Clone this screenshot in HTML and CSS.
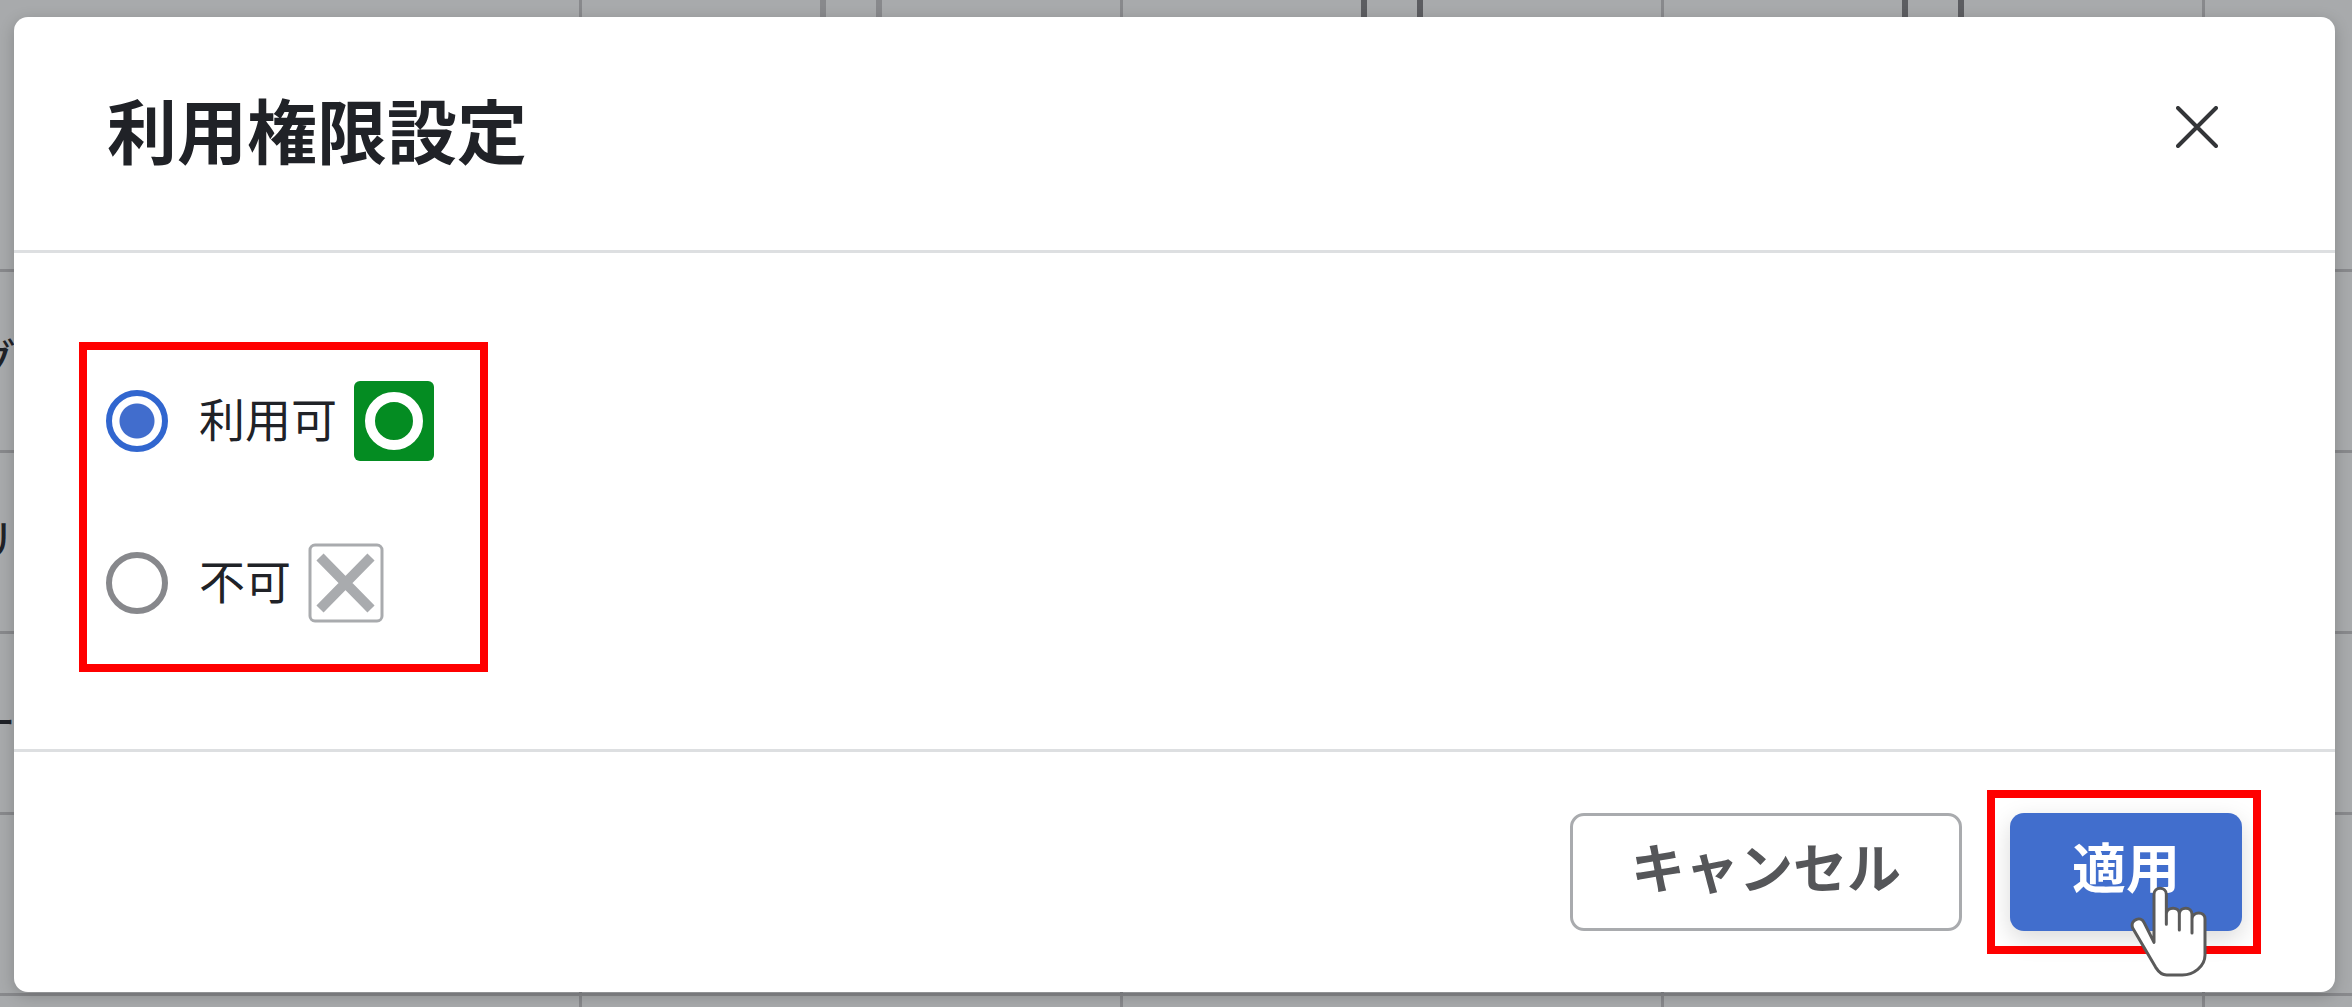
FILE: index.html
```html
<!DOCTYPE html>
<html lang="ja">
<head>
<meta charset="utf-8">
<meta name="viewport" content="width=device-width, initial-scale=1">
<title>利用権限設定</title>
<link rel="stylesheet" href="styles.css">
</head>
<body>
<div class="page">
  <table class="grid" aria-hidden="true">
    <colgroup><col class="col-name"><col class="col-role"><col class="col-role"><col class="col-role"><col></colgroup>
    <thead>
      <tr>
        <th></th>
        <th><input class="check check-off" type="checkbox" disabled></th>
        <th><input class="check" type="checkbox" tabindex="-1"></th>
        <th><input class="check" type="checkbox" tabindex="-1"></th>
        <th></th>
      </tr>
    </thead>
    <tbody>
      <tr><td><span class="name">グ</span></td><td></td><td></td><td></td><td></td></tr>
      <tr><td><span class="name">リ</span></td><td></td><td></td><td></td><td></td></tr>
      <tr><td><span class="name">ー</span></td><td></td><td></td><td></td><td></td></tr>
      <tr><td></td><td></td><td></td><td></td><td></td></tr>
      <tr><td></td><td></td><td></td><td></td><td></td></tr>
    </tbody>
  </table>

  <form class="dialog" role="dialog" aria-labelledby="dialog-title">
    <header class="dialog-header">
      <h1 class="dialog-title" id="dialog-title">利用権限設定</h1>
      <button class="close" type="button" aria-label="閉じる">
        <svg width="42" height="42" viewBox="0 0 42 42" fill="none" stroke="#333538" stroke-width="4" stroke-linecap="round"><path d="M2 2 40 40M40 2 2 40"/></svg>
      </button>
    </header>
    <div class="dialog-body">
      <fieldset class="options">
        <div class="option">
          <input class="radio" type="radio" name="permission" id="allow" checked>
          <label class="option-label" for="allow"><span class="option-text">利用可</span>
            <svg width="80" height="80" viewBox="0 0 80 80"><rect width="80" height="80" rx="6" fill="#048c22"/><circle cx="40" cy="40" r="24" fill="none" stroke="#fff" stroke-width="10"/></svg>
          </label>
        </div>
        <div class="option">
          <input class="radio" type="radio" name="permission" id="deny">
          <label class="option-label" for="deny"><span class="option-text">不可</span>
            <svg width="76" height="80" viewBox="0 0 76 80"><rect x="2" y="2" width="72" height="76" rx="5" fill="#fff" stroke="#a9abae" stroke-width="3"/><path d="M12 14 63 66M63 14 12 66" fill="none" stroke="#a9abae" stroke-width="10"/></svg>
          </label>
        </div>
      </fieldset>
    </div>
    <footer class="dialog-footer">
      <button class="button button-cancel" type="button">キャンセル</button>
      <div class="focus-frame">
        <button class="button button-apply" type="submit">適用</button>
        <svg class="pointer" width="78" height="92" viewBox="95 83 234 276" aria-hidden="true"><path d="M167 252V108C167 84 204 84 204 108V198V166C206 144 243 144 243 166V215V166C245 144 281 144 281 168V224V182C283 158 320 158 320 182V290C320 325 285 350 252 350H205C190 350 181 341 172 327L103 209C94 184 128 172 137 192Z" fill="#fff" stroke="#5a5a5a" stroke-width="9" stroke-linejoin="round" stroke-linecap="round"/></svg>
      </div>
    </footer>
  </form>
</div>
</body>
</html>
```
FILE: styles.css
```css
* {
  box-sizing: border-box;
}

body {
  margin: 0;
  background: #a8aaac;
  color: #202227;
  font-family: "Noto Sans CJK JP", sans-serif;
}

.page {
  position: relative;
  min-height: 100vh;
  overflow: hidden;
  display: grid;
  padding: 17px 17px 15px 14px;
}

/* permission table behind the dialog */
.grid {
  position: absolute;
  top: 0;
  left: 0;
  width: 100%;
  table-layout: fixed;
  border-collapse: collapse;
}

.col-name {
  width: 580px;
}

.col-role {
  width: 541px;
}

.grid th,
.grid td {
  height: 181px;
  padding: 0 0 8px;
  border-right: 3px solid #88898c;
  border-bottom: 3px solid #88898c;
  text-align: left;
}

.grid th {
  height: 270px;
  vertical-align: top;
  text-align: center;
}

.grid th:last-child,
.grid td:last-child {
  border-right: 0;
}

.check {
  appearance: none;
  width: 62px;
  height: 62px;
  margin: -30px 0 0;
  border: 6px solid #5c5d61;
}

.check-off {
  border-color: #88898c;
}

.name {
  display: flex;
  justify-content: flex-end;
  width: 16px;
  font-size: 46px;
  line-height: 60px;
}

.dialog {
  position: relative;
  display: flex;
  flex-direction: column;
  border-radius: 14px;
  background: #fff;
  box-shadow: 0 4px 16px rgba(0, 0, 0, 0.2);
}

.dialog-header {
  display: flex;
  justify-content: space-between;
  align-items: flex-start;
  padding: 62px 93px 71px;
  border-bottom: 3px solid #dddfe1;
}

.dialog-title {
  margin: 0;
  font-size: 70px;
  line-height: 100px;
  font-weight: 700;
}

.close {
  display: grid;
  place-items: center;
  width: 90px;
  height: 96px;
  padding: 0;
  border: 0;
  background: none;
}

.dialog-body {
  flex: 1;
  padding: 89px 65px 76px;
}

.options {
  display: flex;
  flex-direction: column;
  gap: 82px;
  width: fit-content;
  margin: 0;
  padding: 31px 46px 41px 19px;
  border: 8px solid #f00;
}

.option {
  display: flex;
  align-items: center;
  gap: 31px;
  height: 80px;
}

.radio {
  appearance: none;
  flex: none;
  width: 62px;
  height: 62px;
  margin: 0;
  border: 6px solid #87888c;
  border-radius: 50%;
}

.radio:checked {
  border-color: #3166cf;
  background: radial-gradient(circle, #416dcd 17px, #fff 18px);
}

.option-label {
  display: flex;
  align-items: center;
  gap: 17px;
  font-size: 46px;
  line-height: 68px;
}

.option-text {
  padding-bottom: 8px;
}

.dialog-footer {
  display: flex;
  justify-content: flex-end;
  align-items: center;
  gap: 25px;
  padding: 38px 74px;
  border-top: 3px solid #dddfe1;
}

.button {
  height: 118px;
  padding: 0 62px 12px;
  border: 0;
  border-radius: 14px;
  font: 700 54px/80px "Noto Sans CJK JP", sans-serif;
}

.button-cancel {
  padding: 0 58px 12px;
  border: 3px solid #a9abae;
  background: #fff;
  color: #555659;
}

.button-apply {
  background: #416ecd;
  color: #fff;
  box-shadow: 0 8px 24px rgba(0, 0, 0, 0.15);
}

.focus-frame {
  position: relative;
  display: flex;
  padding: 15px 11px 15px 15px;
  border: 8px solid #f00;
}

.pointer {
  position: absolute;
  right: 45px;
  bottom: -32px;
}
```
